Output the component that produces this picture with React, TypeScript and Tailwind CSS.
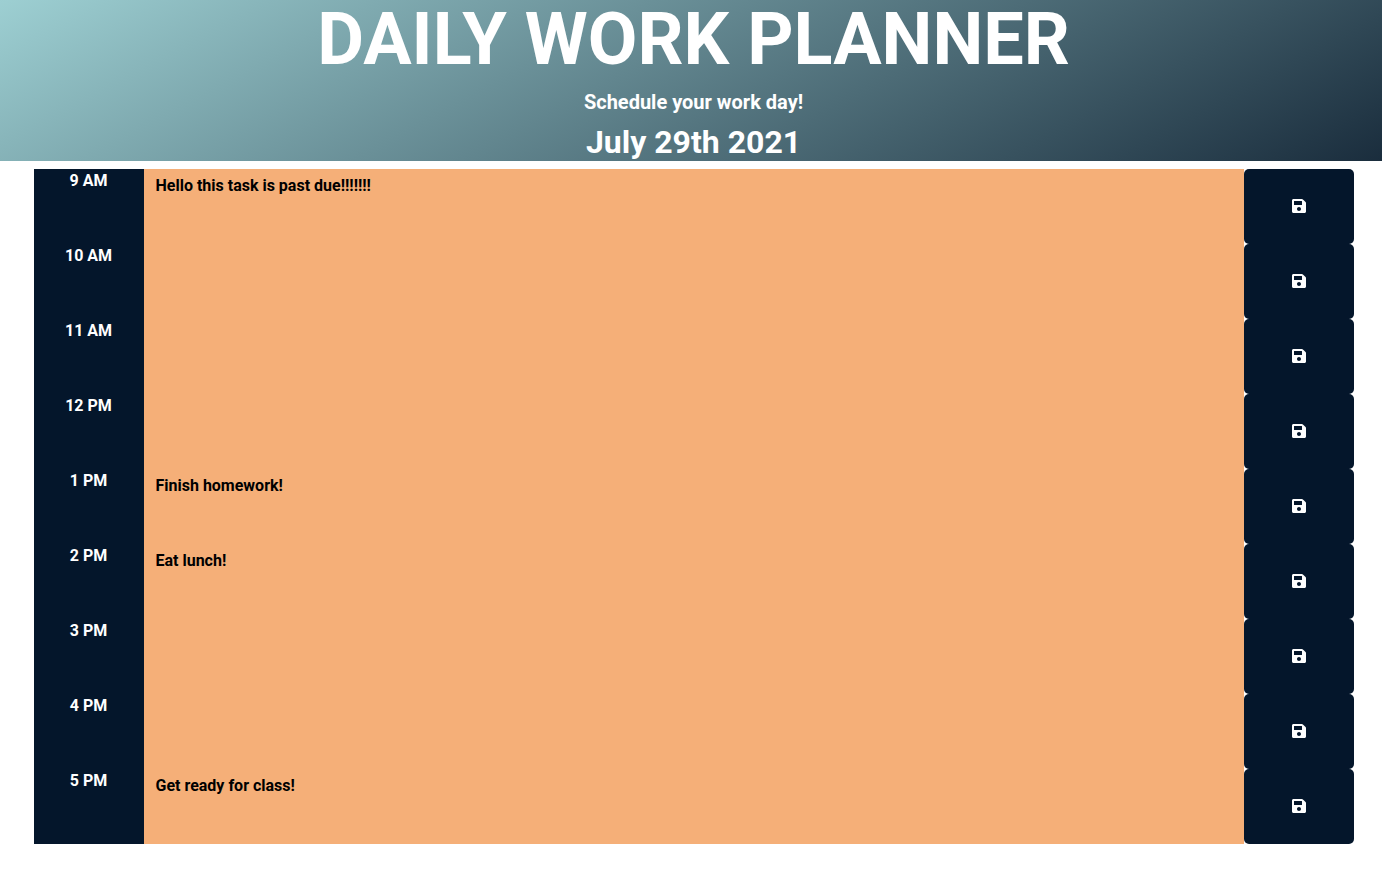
import { FaSave } from "react-icons/fa";

const rows = [
  ["9 AM", "Hello this task is past due!!!!!!!"],
  ["10 AM", ""],
  ["11 AM", ""],
  ["12 PM", ""],
  ["1 PM", "Finish homework!"],
  ["2 PM", "Eat lunch!"],
  ["3 PM", ""],
  ["4 PM", ""],
  ["5 PM", "Get ready for class!"],
];

export default function App() {
  return (
    <div className="min-h-[876px] bg-white font-['Roboto',sans-serif] font-bold">
      <header className="h-[161px] bg-[linear-gradient(152deg,#9dcfd2,#1a2d3d)] pl-[5px] text-center text-white">
        <h1 className="text-[72px] leading-[79px] font-bold uppercase">Daily Work Planner</h1>
        <p className="mt-[11px] text-[20px] leading-[24px]">Schedule your work day!</p>
        <p className="mt-[9px] text-[32px] leading-[38px]">July 29th 2021</p>
      </header>
      <main className="mx-[34px] mt-[8px] flex w-[1320px] flex-col">
        {rows.map(([time, task]) => (
          <div key={time} className="flex h-[75px]">
            <div className="w-[110px] bg-[#04162b] pr-[1px] text-center text-[16px] leading-[24px] text-white">{time}</div>
            <div className="w-[1100px] bg-[#f5af78] pt-[5px] pl-[11.5px] text-[16px] leading-[24px] text-black">{task}</div>
            <button className="flex w-[110px] items-center justify-center rounded-[5px] bg-[#04162b] pr-[1px] pb-[2px] text-white">
              <FaSave className="h-4 w-[14px]" />
            </button>
          </div>
        ))}
      </main>
    </div>
  );
}
